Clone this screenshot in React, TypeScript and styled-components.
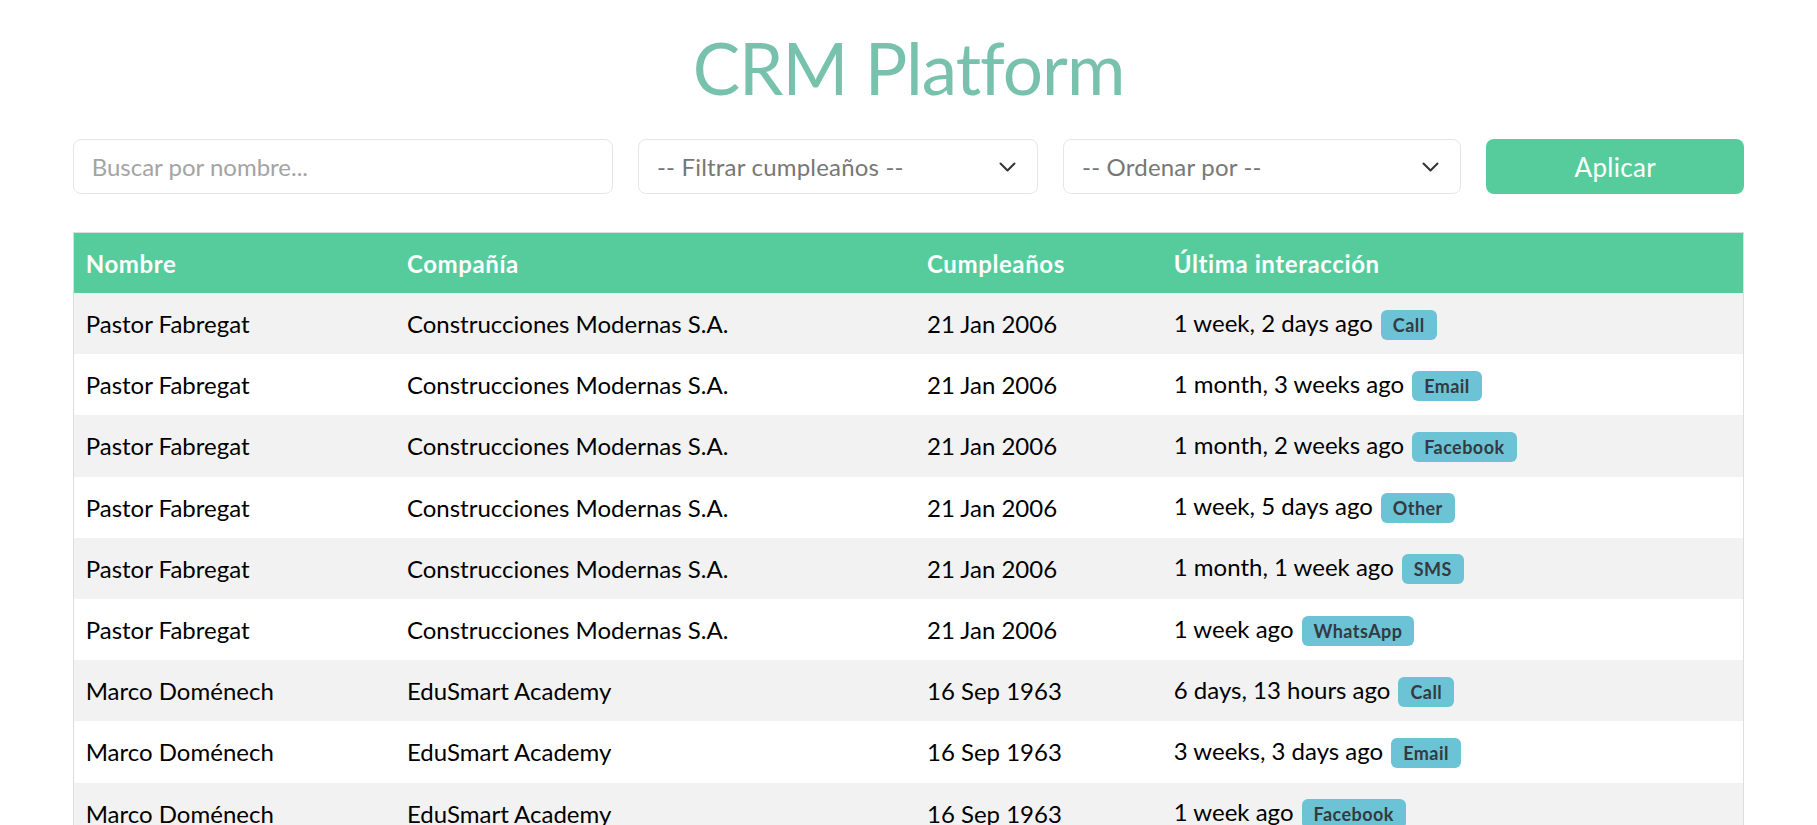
import React from "react";
import styled, { createGlobalStyle } from "styled-components";

const GlobalStyle = createGlobalStyle`
  html, body {
    margin: 0;
    padding: 0;
    background: #ffffff;
  }
  body {
    font-family: Lato, "Noto Sans", sans-serif;
    color: #000000;
  }
`;

const Page = styled.main`
  width: 92%;
  margin: 0 auto;
  padding-top: 32px;
`;

const Title = styled.h1`
  margin: 0;
  font-family: Lato, "Noto Sans", sans-serif;
  font-weight: 400;
  font-size: 71px;
  line-height: 72px;
  letter-spacing: -1px;
  text-align: center;
  color: #78c2ad;
`;

const Controls = styled.form`
  display: grid;
  grid-template-columns: 540fr 400fr 398fr 258fr;
  column-gap: 25px;
  margin-top: 35px;
`;

const fieldBase = `
  box-sizing: border-box;
  width: 100%;
  height: 55px;
  border: 1px solid #e6e6e6;
  border-radius: 8px;
  background: #ffffff;
  font-family: Lato, "Noto Sans", sans-serif;
  font-size: 24px;
  outline: none;
`;

const SearchInput = styled.input`
  ${fieldBase}
  padding: 0 18px;
  color: #555555;
  &::placeholder {
    color: #a4a4a4;
  }
`;

const SelectWrap = styled.div`
  position: relative;
`;

const Select = styled.select`
  ${fieldBase}
  appearance: none;
  -webkit-appearance: none;
  padding: 0 50px 0 18px;
  color: #777777;
  letter-spacing: 0.2px;
`;

const Chevron = styled.svg`
  position: absolute;
  right: 22px;
  top: 50%;
  width: 17px;
  height: 10px;
  transform: translateY(-50%);
  pointer-events: none;
`;

const ApplyButton = styled.button`
  height: 55px;
  border: none;
  border-radius: 8px;
  background: #56cc9d;
  color: #ffffff;
  font-family: Lato, "Noto Sans", sans-serif;
  font-size: 26px;
  font-weight: 400;
  letter-spacing: 0.3px;
  cursor: pointer;
`;

const Table = styled.table`
  width: 100%;
  margin-top: 38px;
  border-collapse: collapse;
  border: 1px solid #dedede;
  table-layout: fixed;
`;

const HeadCell = styled.th`
  height: 60px;
  padding: 0 12px;
  background: #56cc9d;
  color: #ffffff;
  text-align: left;
  font-size: 24px;
  font-weight: 700;
  letter-spacing: 0.6px;
`;

const Row = styled.tr`
  &:nth-child(odd) {
    background: #f2f2f2;
  }
`;

const Cell = styled.td`
  height: 61.2px;
  padding: 0 12px;
  font-size: 24px;
  color: #000000;
  vertical-align: middle;
  white-space: nowrap;
`;

const Badge = styled.span`
  display: inline-block;
  margin-left: 8px;
  padding: 0 12px;
  border-radius: 6px;
  background: #6cc3d5;
  color: #343a40;
  font-size: 18px;
  font-weight: 700;
  letter-spacing: 0.45px;
  line-height: 30px;
`;

type Contact = {
  name: string;
  company: string;
  birthday: string;
  last: string;
  channel: string;
};

const pastor = {
  name: "Pastor Fabregat",
  company: "Construcciones Modernas S.A.",
  birthday: "21 Jan 2006",
};

const marco = {
  name: "Marco Doménech",
  company: "EduSmart Academy",
  birthday: "16 Sep 1963",
};

const contacts: Contact[] = [
  { ...pastor, last: "1 week, 2 days ago", channel: "Call" },
  { ...pastor, last: "1 month, 3 weeks ago", channel: "Email" },
  { ...pastor, last: "1 month, 2 weeks ago", channel: "Facebook" },
  { ...pastor, last: "1 week, 5 days ago", channel: "Other" },
  { ...pastor, last: "1 month, 1 week ago", channel: "SMS" },
  { ...pastor, last: "1 week ago", channel: "WhatsApp" },
  { ...marco, last: "6 days, 13 hours ago", channel: "Call" },
  { ...marco, last: "3 weeks, 3 days ago", channel: "Email" },
  { ...marco, last: "1 week ago", channel: "Facebook" },
  { ...marco, last: "2 weeks, 1 day ago", channel: "Other" },
  { ...marco, last: "1 month ago", channel: "SMS" },
  { ...marco, last: "4 days ago", channel: "WhatsApp" },
];

const ChevronIcon = () => (
  <Chevron viewBox="0 0 17 10" aria-hidden="true">
    <polyline
      points="1.5,1.5 8.5,8.5 15.5,1.5"
      fill="none"
      stroke="#333333"
      strokeWidth="2"
      strokeLinecap="round"
      strokeLinejoin="round"
    />
  </Chevron>
);

export default function App() {
  return (
    <>
      <GlobalStyle />
      <Page>
        <Title>CRM Platform</Title>
        <Controls onSubmit={(e) => e.preventDefault()}>
          <SearchInput type="text" placeholder="Buscar por nombre..." />
          <SelectWrap>
            <Select defaultValue="">
              <option value="">-- Filtrar cumpleaños --</option>
              <option value="week">Esta semana</option>
              <option value="month">Este mes</option>
            </Select>
            <ChevronIcon />
          </SelectWrap>
          <SelectWrap>
            <Select defaultValue="">
              <option value="">-- Ordenar por --</option>
              <option value="name">Nombre</option>
              <option value="last">Última interacción</option>
            </Select>
            <ChevronIcon />
          </SelectWrap>
          <ApplyButton type="submit">Aplicar</ApplyButton>
        </Controls>
        <Table>
          <colgroup>
            <col style={{ width: "19.26%" }} />
            <col style={{ width: "31.13%" }} />
            <col style={{ width: "14.77%" }} />
            <col />
          </colgroup>
          <thead>
            <tr>
              <HeadCell>Nombre</HeadCell>
              <HeadCell>Compañía</HeadCell>
              <HeadCell>Cumpleaños</HeadCell>
              <HeadCell>Última interacción</HeadCell>
            </tr>
          </thead>
          <tbody>
            {contacts.map((c, i) => (
              <Row key={i}>
                <Cell>{c.name}</Cell>
                <Cell>{c.company}</Cell>
                <Cell>{c.birthday}</Cell>
                <Cell>
                  {c.last}
                  <Badge>{c.channel}</Badge>
                </Cell>
              </Row>
            ))}
          </tbody>
        </Table>
      </Page>
    </>
  );
}
